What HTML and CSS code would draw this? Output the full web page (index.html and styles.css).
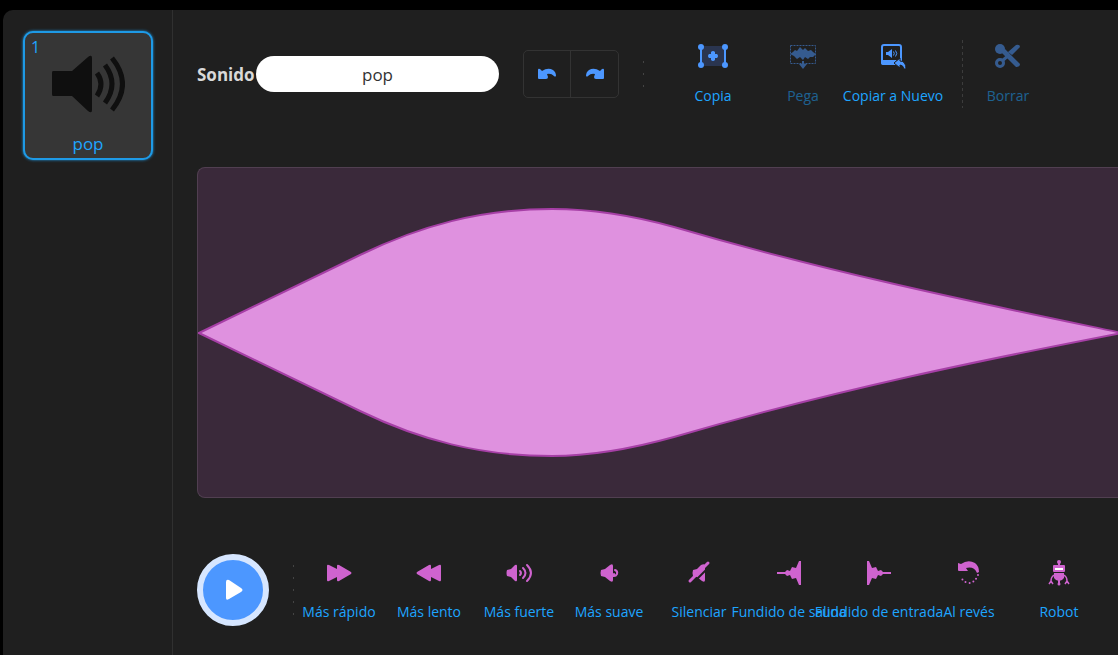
FILE: index.html
```
<!DOCTYPE html>
<html lang="es">
<head>
	<meta charset="utf-8">
	<title>Editor de sonidos</title>
	<link rel="stylesheet" href="styles.css">
</head>
<body>
	<div class="asset-panel">
		<aside class="selector">
			<button class="sound-tile">
				<span class="tile-number">1</span>
				<svg class="tile-icon" width="74" height="58" viewBox="0 0 74 58">
					<path fill="#0f0f0f" d="M2 16H21L37 2Q41 -1 41 3V55Q41 59 37 56L21 41H2Q1 41 1 39V18Q1 16 2 16Z"/>
					<g fill="none" stroke="#0f0f0f" stroke-width="5">
						<path d="M46 18Q54 29 46 41"/>
						<path d="M54 10Q68 29 54 48"/>
						<path d="M61 3Q82 29 61 55"/>
					</g>
				</svg>
				<span class="tile-name">pop</span>
			</button>
		</aside>

		<main class="editor">
			<div class="toolbar">
				<label class="name-label" for="sound-name">Sonido</label>
				<input class="name-input" id="sound-name" type="text" value="pop">
				<div class="history">
					<button class="history-button" aria-label="Deshacer">
						<svg width="20" height="12" viewBox="0 0 20 12"><path fill="#4c97ff" d="M1 2Q1 0 3 1L5 3Q11 -1 16 2Q19 4 19 8Q18 9 17 8Q14 5 10 6L11 9Q11 11 9 11H2Q1 11 1 10Z"/></svg>
					</button>
					<button class="history-button" aria-label="Rehacer">
						<svg width="20" height="12" viewBox="0 0 20 12"><path fill="#4c97ff" d="M19 2Q19 0 17 1L15 3Q9 -1 4 2Q1 4 1 8Q2 9 3 8Q6 5 10 6L9 9Q9 11 11 11H18Q19 11 19 10Z"/></svg>
					</button>
				</div>
				<div class="divider short"></div>
				<div class="tools">
					<button class="tool">
						<svg width="32" height="26" viewBox="0 0 32 26">
							<path fill="#2a3550" d="M4 3H28V23H4Z"/>
							<path stroke="#4c97ff" stroke-width="2" d="M4 4V22M28 4V22"/>
							<g fill="#4c97ff">
								<circle cx="4" cy="4" r="3"/><circle cx="28" cy="4" r="3"/>
								<circle cx="4" cy="22" r="3"/><circle cx="28" cy="22" r="3"/>
								<path d="M14 9Q16 7 18 9V11H20Q22 13 20 15H18V17Q16 19 14 17V15H12Q10 13 12 11H14Z"/>
							</g>
						</svg>
						<span>Copia</span>
					</button>
					<button class="tool" disabled>
						<svg width="32" height="26" viewBox="0 0 32 26">
							<path fill="none" stroke="#4c97ff" stroke-dasharray="2 1" d="M3.500 2.500H28.500V20.500H3.500Z"/>
							<path fill="#4c97ff" d="M3 11L6 9L8 7L10 8L13 4L16 7L18 5L21 8L24 7L26 9L29 11L26 14L23 14L21 16L18 14L16 17L13 14L10 16L7 13ZM15 18H17V21H20L16 26L12 21H15Z"/>
						</svg>
						<span>Pega</span>
					</button>
					<button class="tool">
						<svg width="32" height="26" viewBox="0 0 32 26">
							<rect x="5" y="2" width="19" height="19" rx="2" fill="none" stroke="#4c97ff" stroke-width="2"/>
							<path fill="#4c97ff" d="M4 17H20L18 19L20 22H6Q4 22 4 20ZM9 9H11L15 6V15L11 12H9Z"/>
							<path fill="none" stroke="#4c97ff" d="M16.500 8.500Q18 10.500 16.500 12.500M18.500 7.500Q21 10.500 18.500 13.500"/>
							<path fill="#4c97ff" stroke="#1f1f1f" stroke-width="1" d="M17 20L23 15V18Q29 18 29 26H27Q26 22 23 22V25Z"/>
						</svg>
						<span>Copiar a Nuevo</span>
					</button>
				</div>
				<div class="divider long"></div>
				<button class="tool" disabled>
					<svg width="32" height="26" viewBox="0 0 32 26">
						<g fill="#4c97ff">
							<circle cx="8" cy="6" r="5"/>
							<path d="M9 9L13 6L28 21Q28 24 24 24ZM24 2Q28 1 28 4L20 12L16 9Z"/>
						</g>
						<path stroke="#4c97ff" stroke-width="3" d="M10 18L17 12"/>
						<circle cx="8" cy="20" r="3.500" fill="none" stroke="#4c97ff" stroke-width="3"/>
					</svg>
					<span>Borrar</span>
				</button>
			</div>

			<div class="waveform">
				<svg class="wave" viewBox="0 0 920 329" preserveAspectRatio="none">
					<path fill="#df91df" stroke="#a63fa6" stroke-width="2" d="M1 165L162 87C222 58 282 41 354 41C400 41 440 49 476 59C640 107 790 137 924 165C790 191 640 221 476 269C440 279 400 288 354 288C282 288 222 272 162 243Z"/>
				</svg>
			</div>

			<div class="effects-row">
				<button class="play" aria-label="Reproducir">
					<svg width="20" height="22" viewBox="0 0 20 22"><path fill="#fff" d="M3 3Q3 0 6 1L18 9Q21 11 18 13L6 20Q3 22 3 19Z"/></svg>
				</button>
				<div class="divider middle"></div>
				<div class="effects">
					<button class="tool">
						<svg width="32" height="26" viewBox="0 0 32 26"><path fill="#cf63cf" d="M4 6Q4 4 6 5L14 9V6Q14 4 16 5L28 12Q29 13 28 14L16 21Q14 22 14 20V17L6 21Q4 22 4 20Z"/></svg>
						<span>Más rápido</span>
					</button>
					<button class="tool">
						<svg width="32" height="26" viewBox="0 0 32 26"><path fill="#cf63cf" d="M28 6Q28 4 26 5L18 9V6Q18 4 16 5L4 12Q3 13 4 14L16 21Q18 22 18 20V17L26 21Q28 22 28 20Z"/></svg>
						<span>Más lento</span>
					</button>
					<button class="tool">
						<svg width="32" height="26" viewBox="0 0 32 26">
							<path fill="#cf63cf" d="M4 10L8 9L12 5Q14 4 14 6V20Q14 22 12 21L8 17L4 16Q3 13 4 10Z"/>
							<path fill="none" stroke="#cf63cf" stroke-width="2" stroke-linecap="round" d="M17 11Q19 13 17 15M20 8Q25 13 20 18M24 5Q32 13 24 21"/>
						</svg>
						<span>Más fuerte</span>
					</button>
					<button class="tool">
						<svg width="32" height="26" viewBox="0 0 32 26">
							<path fill="#cf63cf" d="M8 10L12 9L17 5Q20 3 20 6V20Q20 23 17 21L12 17L8 16Q7 13 8 10Z"/>
							<path fill="none" stroke="#cf63cf" stroke-width="2" stroke-linecap="round" d="M22 10Q25 11 24 14Q23 16 21 16V14"/>
						</svg>
						<span>Más suave</span>
					</button>
					<button class="tool">
						<svg width="32" height="26" viewBox="0 0 32 26">
							<path fill="#cf63cf" d="M10 10L14 9L18 5Q22 3 22 6V20Q22 23 19 21L14 17L10 16Q9 13 10 10Z"/>
							<path stroke="#1f1f1f" stroke-width="2" d="M9 24L28 5"/>
							<path stroke="#cf63cf" stroke-width="3" stroke-linecap="round" d="M7 21L25 3"/>
						</svg>
						<span>Silenciar</span>
					</button>
					<button class="tool">
						<svg width="32" height="26" viewBox="0 0 32 26"><path fill="#cf63cf" d="M4 12H12L14 10L17 11L19 7L23 8L26 1H28V25H26L23 18L19 19L17 15L14 16L12 14H4Z"/></svg>
						<span>Fundido de salida</span>
					</button>
					<button class="tool">
						<svg width="32" height="26" viewBox="0 0 32 26"><path fill="#cf63cf" d="M28 12H20L18 10L15 11L13 7L9 8L6 1H4V25H6L9 18L13 19L15 15L18 16L20 14H28Z"/></svg>
						<span>Fundido de entrada</span>
					</button>
					<button class="tool">
						<svg width="32" height="26" viewBox="0 0 32 26">
							<path fill="#cf63cf" d="M5 3L8 4Q15 -1 22 3Q26 6 26 12L24 13Q21 6 13 8L15 11H6Q5 11 5 10Z"/>
							<path fill="none" stroke="#cf63cf" stroke-width="2" stroke-linecap="round" stroke-dasharray="0 4" d="M25 15Q22 23 15 23Q11 22 9 19"/>
						</svg>
						<span>Al revés</span>
					</button>
					<button class="tool">
						<svg width="32" height="26" viewBox="0 0 32 26">
							<g fill="#cf63cf">
								<circle cx="16" cy="2" r="2"/><rect x="15" y="3" width="2" height="4"/>
								<rect x="10" y="5" width="12" height="7" rx="1"/>
								<path d="M11 13H21V18Q19 21 16 21Q13 21 11 18Z"/>
								<circle cx="16" cy="24" r="1.500"/><rect x="15" y="20" width="2" height="4"/>
							</g>
							<path stroke="#fff" stroke-width="2" d="M12 9H20"/>
							<path fill="none" stroke="#cf63cf" stroke-width="1.500" d="M11 15Q8 17 8 21M21 15Q24 17 24 21M6 24L8 21L10 24M22 24L24 21L26 24"/>
						</svg>
						<span>Robot</span>
					</button>
				</div>
			</div>
		</main>
	</div>
</body>
</html>
```

FILE: styles.css
```
* {
	box-sizing: border-box;
}
body {
	margin: 0;
	background: #000;
	font-family: "Open Sans", "Noto Sans", sans-serif;
	overflow: hidden;
}
button {
	padding: 0;
	border: none;
	background: none;
	color: inherit;
	font: inherit;
	cursor: pointer;
}
.asset-panel {
	display: flex;
	min-height: calc(100vh - 10px);
	margin: 10px 0 0 3px;
	border-top-left-radius: 10px;
	background: #1f1f1f;
	color: #1ea5ff;
}

/* sound list */
.selector {
	flex: none;
	width: 170px;
	padding: 21px 20px;
	border-right: 1px solid #303030;
}
.sound-tile {
	position: relative;
	display: flex;
	flex-direction: column;
	align-items: center;
	justify-content: space-between;
	width: 130px;
	height: 129px;
	padding: 22px 0 2px;
	border: 2px solid #1e9ae6;
	border-radius: 10px;
	background: #363636;
	box-shadow: 0 0 3px #1e9ae6;
	font-size: 17px;
	line-height: 24px;
}
.tile-number {
	position: absolute;
	top: 2px;
	left: 6px;
	font-size: 16px;
}

/* editor */
.editor {
	flex: 1;
	min-width: 0;
	padding: 24px 0 24px 24px;
}
.toolbar {
	display: flex;
	align-items: center;
	height: 80px;
}
.name-label {
	flex: none;
	width: 59px;
	color: #d9d9d9;
	font-size: 17px;
	font-weight: bold;
}
.name-input {
	flex: none;
	width: 243px;
	height: 36px;
	border: none;
	border-radius: 18px;
	background: #fff;
	color: #333;
	font: inherit;
	font-size: 17px;
	text-align: center;
}
.history {
	display: flex;
	flex: none;
	margin: 0 24px;
	border: 1px solid #333;
	border-radius: 5px;
}
.history-button {
	display: flex;
	align-items: center;
	justify-content: center;
	width: 47px;
	height: 46px;
}
.history-button:first-child {
	width: 46px;
}
.history-button + .history-button {
	width: 48px;
	border-left: 1px solid #333;
}

.divider {
	flex: none;
	width: 1px;
}
.divider.short {
	height: 26px;
	margin-right: 24px;
	background: repeating-linear-gradient(#444 0 2px, transparent 2px 12px);
}
.divider.middle {
	height: 50px;
	margin-left: 24px;
	background: repeating-linear-gradient(#444 0 2px, transparent 2px 12px);
}
.divider.long {
	height: 68px;
	background: repeating-linear-gradient(#3c3c3c 0 3px, transparent 3px 6px);
}

.tools {
	display: flex;
	margin-right: 24px;
}
.tool {
	display: flex;
	flex: none;
	flex-direction: column;
	align-items: center;
	gap: 16px;
	width: 90px;
	padding-top: 2px;
	font-size: 14px;
	line-height: 22px;
	white-space: nowrap;
}
.tool:disabled {
	opacity: 0.5;
	cursor: default;
}

.waveform {
	height: 331px;
	margin-top: 53px;
	border: 1px solid #513f51;
	border-right: none;
	border-radius: 8px 0 0 8px;
	background: #3a293a;
}
.wave {
	display: block;
	width: 100%;
	height: 100%;
}

.effects-row {
	display: flex;
	align-items: center;
	margin-top: 56px;
}
.play {
	display: flex;
	flex: none;
	align-items: center;
	justify-content: center;
	width: 72px;
	height: 72px;
	border: 6px solid #d6e6ff;
	border-radius: 50%;
	background: #4c97ff;
}
.effects {
	display: flex;
}
.effects .tool {
	gap: 15px;
	padding-top: 3px;
}
```
